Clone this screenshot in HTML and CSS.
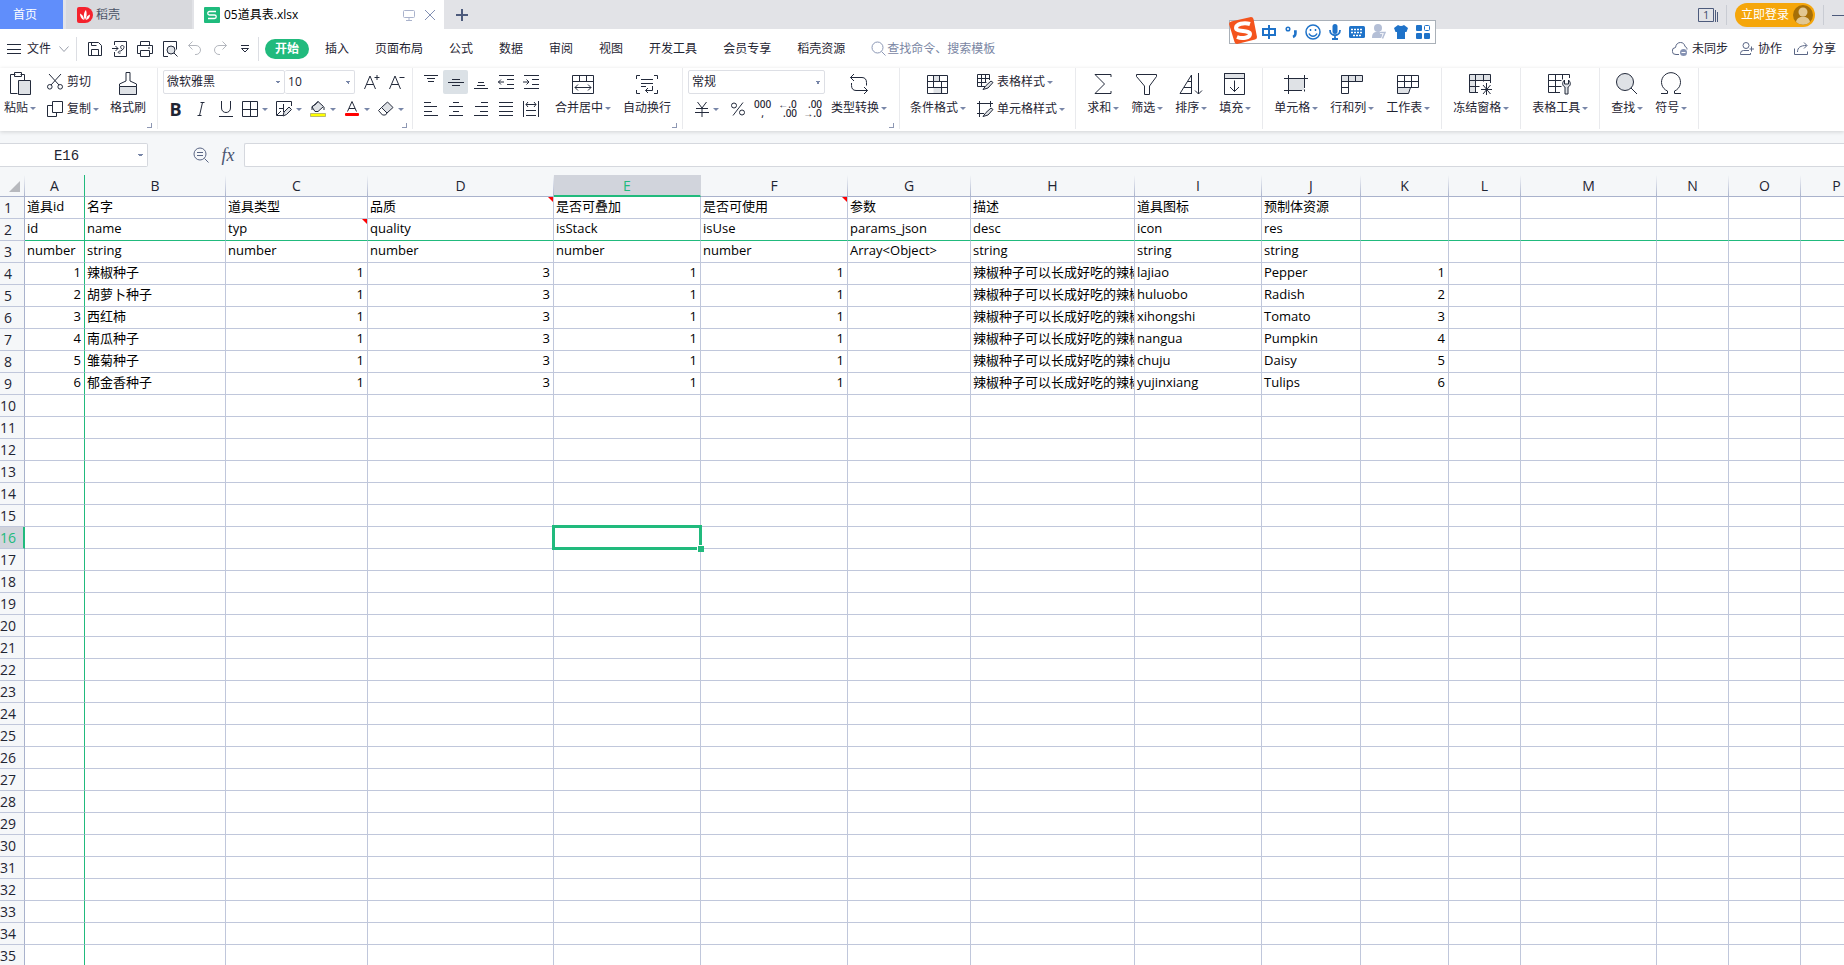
FILE: index.html
```html
<!DOCTYPE html>
<html lang="zh-CN">
<head>
<meta charset="utf-8">
<title>05道具表.xlsx</title>
<link rel="stylesheet" href="styles.css">
</head>
<body>
<header class="tabs">
  <button class="tab tab-home">首页</button>
  <button class="tab tab-docer">
    <svg width="16" height="16" viewBox="0 0 16 16"><path d="M2 0h6a8 8 0 0 1 0 16H2a2 2 0 0 1-2-2V2a2 2 0 0 1 2-2z" fill="#f5222d"/><path d="M8 13C6 9 7 5 9 3c1 3 1 7-1 10zM7 13C4 12 3 9 3 6.500c2 1 4 3 4 6.500zM9 13c0-3 2-5 4-5.500 0 3-1.500 5-4 5.500z" fill="#fff"/></svg>稻壳</button>
  <div class="tab tab-active">
    <svg width="16" height="16" viewBox="0 0 16 16"><rect width="16" height="16" rx="1" fill="#1fbb7d"/><path d="M12 4.500H5.500a1.500 1.500 0 0 0 0 3.500h5a1.500 1.500 0 0 1 0 3.500H4" fill="none" stroke="#fff" stroke-width="1.300"/></svg>
    <span class="tab-name">05道具表.xlsx</span>
    <button class="icon-btn" aria-label="窗口"><svg width="12" height="12" fill="none" stroke="#aab3cc"><path d="M1.500 1.500h9a1 1 0 0 1 1 1v5a1 1 0 0 1-1 1h-9a1 1 0 0 1-1-1v-5a1 1 0 0 1 1-1zM6 8.500v3M3 11.500h6"/></svg></button>
    <button class="icon-btn" aria-label="关闭"><svg width="12" height="12" fill="none" stroke="#8290b3"><path d="M1 1l10 10M11 1L1 11"/></svg></button>
  </div>
  <button class="icon-btn tab-add" aria-label="新建"><svg width="12" height="12"><path d="M6 0v12M0 6h12" stroke="#4d5b7c" stroke-width="2"/></svg></button>
  <div class="win">
    <button class="icon-btn" aria-label="窗口数"><svg width="20" height="14" fill="none" stroke="#4d5b7c"><path d="M.5.5h15v13H.5zM17.500 2v12M19.500 4v10"/><text x="5" y="11" font-size="11" font-family="Open Sans" fill="#3d4b6c" stroke="none">1</text></svg></button>
    <span class="vline"></span>
    <button class="login">立即登录<svg width="20" height="20"><circle cx="10" cy="10" r="10" fill="#a66f08"/><circle cx="10" cy="7" r="4.500" fill="#e2c791"/><path d="M3 17c1-7 13-7 14 0a10 10 0 0 1-14 0z" fill="#e2c791"/></svg></button>
    <span class="vline"></span>
    <button class="icon-btn minimize" aria-label="最小化"><svg width="12" height="12"><path d="M0 6.500h12" stroke="#4d5b7c"/></svg></button>
  </div>
</header>

<nav class="menu">
  <button class="file"><svg width="14" height="10" stroke="#232a3b"><path d="M0 .5h14M0 5h14M0 9.500h14" shape-rendering="crispEdges"/></svg>文件<svg width="10" height="6" fill="none" stroke="#9a9fab"><path d="M.5.5L5 5.500 9.500.5"/></svg></button>
  <span class="vline menu-line"></span>
  <div class="quick">
    <button aria-label="保存"><svg class="ic" width="16" height="16"><path d="M1.500 1.500h10l3 3v10h-13zM4.500 14.500v-6h7v6M4.500 1.500v3h5"/></svg></button>
    <button aria-label="输出为PDF"><svg class="ic" width="16" height="16"><path d="M2.500 4V.5h12v15h-12V11M0 7.500h6M3.500 5L6 7.500 3.500 10M8.500 12c-3 1-3-2 0-2 3-1 5-5 2-5.500-3 0-2 3 0 4"/></svg></button>
    <button aria-label="打印"><svg class="ic" width="16" height="16"><path d="M3.500 4.500v-4h9v4M3.500 12.500h-3v-8h15v8h-3M3.500 9.500h9v6h-9zM11 7h2"/></svg></button>
    <button aria-label="打印预览"><svg class="ic" width="16" height="16"><path d="M6 15.500H1.500V.5h13v8"/><circle cx="9" cy="9" r="4" fill="#dfe2e6"/><path d="M12 12l3.500 3.500"/></svg></button>
    <button aria-label="撤销"><svg class="ic dim" width="16" height="16"><path d="M5.500.5l-4 4 4 4M1.500 4.500H9a4.500 4.500 0 0 1 0 9H8"/></svg></button>
    <button aria-label="恢复"><svg class="ic dim" width="16" height="16"><path d="M10.500.5l4 4-4 4M14.500 4.500H7a4.500 4.500 0 0 0 0 9h1"/></svg></button>
    <button aria-label="更多"><svg class="ic" width="8" height="8"><path d="M0 .5h8M.5 3.500L4 7l3.500-3.500z"/></svg></button>
  </div>
  <span class="vline menu-line"></span>
  <button class="pill">开始</button>
  <div class="menus"><button>插入</button><button>页面布局</button><button>公式</button><button>数据</button><button>审阅</button><button>视图</button><button>开发工具</button><button>会员专享</button><button>稻壳资源</button></div>
  <button class="search"><svg width="16" height="16" fill="none" stroke="#8c98b5"><circle cx="6.500" cy="6.500" r="5.500"/><path d="M10.500 10.500l4 4"/></svg>查找命令、搜索模板</button>
  <div class="share">
    <button><svg width="16" height="14" fill="none" stroke="#5a6685"><path d="M7 12.500H4a3.500 3.500 0 0 1-.5-7C4 2 6 .5 8.500.5s4 1.500 4.500 4c1.500.500 2 1.500 2 3"/><circle cx="11.500" cy="10.500" r="3.500" fill="#8592b3" stroke="none"/><path d="M9.500 10.500h4" stroke="#fff"/></svg>未同步</button>
    <button><svg width="14" height="14" fill="none" stroke="#5a6685"><circle cx="6" cy="3.500" r="3"/><path d="M9 8.500H3.500a3 3 0 0 0-3 3v1h10v-1.500M9.500 7h4.500M11.500 4.500v5"/></svg>协作</button>
    <button><svg width="14" height="14" fill="none" stroke="#5a6685"><path d="M.5 6.500v6h13v-3M3.500 10c0-4.500 3-6.500 9-6.500M10 .5l3 3-3 3"/></svg>分享</button>
  </div>
</nav>

<section class="ribbon">
  <div class="group g-clip">
    <button class="big"><svg class="ic" width="22" height="24"><path d="M6.500 2.500h-5v19h7M15.500 8V2.500h-4M5.500.5h7v4h-7z"/><path d="M9.500 8.500h12v14h-12z" fill="#dfe2e6"/></svg><span class="dd">粘贴</span></button>
    <div class="stack">
      <button class="row"><svg class="ic" width="16" height="16"><path d="M2 0l10 11M14 0L4 11"/><circle cx="2.800" cy="12.800" r="2.300"/><circle cx="13.200" cy="12.800" r="2.300"/></svg>剪切</button>
      <button class="row"><svg class="ic" width="16" height="16"><path d="M5.500.5h10v11h-10zM5.500 4.500h-5v11h9v-4"/></svg><span class="dd">复制</span></button>
    </div>
    <button class="big"><svg class="ic" width="18" height="24"><path d="M.5 14.500h17v8H.5z" fill="#dfe2e6"/><path d="M.5 14.500V12L7 9V.5h4V9l6.500 3v2.500"/></svg>格式刷</button>
    <i class="corner"></i>
  </div>

  <div class="group g-font">
    <div class="line">
      <select class="combo c-font" aria-label="字体"><option>微软雅黑</option></select><select class="combo c-size" aria-label="字号"><option>10</option></select>
      <button class="sq first" aria-label="增大字号"><svg class="ic" width="16" height="16"><path d="M.5 15L6 2l5.500 13M2.500 10.500h7M10.500 3.500h5M13 1v5"/></svg></button>
      <button class="sq" aria-label="减小字号"><svg class="ic" width="16" height="16"><path d="M.5 15L6 2l5.500 13M2.500 10.500h7M10.500 3.500h5"/></svg></button>
    </div>
    <div class="line">
      <button class="sq bold">B</button>
      <button class="sq" aria-label="倾斜"><svg class="ic" width="16" height="16"><path d="M9.500 1.500L6.500 14.500M7.500 1.500h4M4.500 14.500h4"/></svg></button>
      <button class="sq" aria-label="下划线"><svg class="ic" width="16" height="16"><path d="M3.500 0v7c0 6 9 6 9 0V0M1 15.500h14"/></svg></button>
      <button class="split" aria-label="边框"><svg class="ic" width="16" height="16"><path d="M.5.5h15v15H.5zM8.500.5v15M.5 8.500h15"/></svg></button>
      <button class="split" aria-label="单元格绘制"><svg class="ic" width="16" height="16"><path d="M7 14.500H.5V.5h15V5M3 7.500h4M7.500 3v8M1 14l4-4"/><path d="M13 6l2.500 2.500-5 5L7 15l1-4z" fill="#dfe2e6"/></svg></button>
      <button class="split" aria-label="填充颜色"><svg class="ic" width="16" height="16"><path d="M8 .5l5.500 5L8 10.500H5L2 6z" fill="#dfe2e6"/><path d="M2 9V5.500C4 4 6 4 8 .5M14 6v3"/><path d="M.5 12.500h15v3H.5z" fill="#ff0" stroke="#77765c" stroke-width=".5"/></svg></button>
      <button class="split" aria-label="字体颜色"><svg class="ic" width="16" height="16"><path d="M3.500 10.500L8 .5l4.500 10M5 7.500h6"/><rect x="1" y="12" width="14" height="3" rx="1" fill="#f00" stroke="none"/></svg></button>
      <button class="split" aria-label="清除"><svg class="ic" width="16" height="16"><path d="M9.500 1L15 6.500 9 12 3.500 6.500z" fill="#dfe2e6"/><path d="M3.500 6.500L.5 9.500l4 4.500h3L9 12"/></svg></button>
    </div>
    <i class="corner"></i>
  </div>

  <div class="group g-align">
    <div class="stack">
      <div class="line">
        <button class="al" aria-label="顶端对齐"><svg class="ic" width="16" height="16"><path d="M1 1.500h14M4 4.500h8M5 7.500h6"/></svg></button>
        <button class="al on" aria-label="垂直居中"><svg class="ic" width="16" height="16"><path d="M4 5.500h8M0 8.500h16M4 11.500h8"/></svg></button>
        <button class="al" aria-label="底端对齐"><svg class="ic" width="16" height="16"><path d="M5 8.500h6M4 11.500h8M1 14.500h14"/></svg></button>
        <button class="al" aria-label="减少缩进"><svg class="ic" width="16" height="16"><path d="M1 1.500h15M9 5.500h7M9 10.500h7M1 14.500h15M0 8h6M3 5.500L.5 8 3 10.500"/></svg></button>
        <button class="al" aria-label="增加缩进"><svg class="ic" width="16" height="16"><path d="M1 1.500h15M9 5.500h7M9 10.500h7M1 14.500h15M0 8h6M3.500 5.500L6 8l-2.500 2.500"/></svg></button>
      </div>
      <div class="line">
        <button class="al" aria-label="左对齐"><svg class="ic" width="16" height="16"><path d="M1 1.500h7M1 5.500h13M1 10.500h8M1 14.500h14"/></svg></button>
        <button class="al" aria-label="居中"><svg class="ic" width="16" height="16"><path d="M5 1.500h6M1 5.500h14M5 10.500h6M1 14.500h14"/></svg></button>
        <button class="al" aria-label="右对齐"><svg class="ic" width="16" height="16"><path d="M8 1.500h7M2 5.500h13M7 10.500h8M1 14.500h14"/></svg></button>
        <button class="al" aria-label="两端对齐"><svg class="ic" width="16" height="16"><path d="M1 1.500h14M1 5.500h14M1 10.500h14M1 14.500h14"/></svg></button>
        <button class="al" aria-label="分散对齐"><svg class="ic" width="16" height="16"><path d="M.5 0v16M15.500 0v16M3 3.500h10M5 1L3 3.500 5 6M11 1l2 2.500L11 6M3 9.500h10M3 14.500h10"/></svg></button>
      </div>
    </div>
    <button class="big"><svg class="ic" width="22" height="24"><path d="M.5 3.500h21v18H.5zM.5 9.500h21M7.500 3.500v6M14.500 3.500v6M3 15.500h16M6 12.500l-3 3 3 3M16 12.500l3 3-3 3"/></svg><span class="dd">合并居中</span></button>
    <button class="big"><svg class="ic" width="22" height="24"><path d="M4 3.500H.5V7M18 3.500h3.500V7M4 21.500H.5V18M18 21.500h3.500V18M5 7.500h12M5 11.500h12M5 14.500h5M16.500 14v4.500h-7M12 16l-2.500 2.500L12 21"/></svg>自动换行</button>
    <i class="corner"></i>
  </div>

  <div class="group g-num">
    <div class="stack">
      <select class="combo c-num" aria-label="数字格式"><option>常规</option></select>
      <div class="line">
        <button class="split yen" aria-label="货币"><svg class="ic" width="14" height="16"><path d="M2.500 1L7 7l4.500-6M7 7v9M1 7.500h12M0 11.500h14"/></svg></button>
        <button class="al" aria-label="百分比"><svg class="ic" width="16" height="16"><circle cx="4" cy="4.500" r="2.500"/><circle cx="12" cy="11.500" r="2.500"/><path d="M13 1.500L3 14.500"/></svg></button>
        <button class="al mono"><span>000</span><span>,</span></button>
        <button class="al mono"><span>←.0</span><span class="end">.00</span></button>
        <button class="al mono"><span class="end">.00</span><span>→.0</span></button>
      </div>
    </div>
    <button class="big"><svg class="ic" width="20" height="24"><path d="M5 2L1.500 5.500 5 9M1.500 5.500H13c3 0 4.500 2 4.500 5v3M15 15l3.500 3.500L15 22M18.500 18.500H7c-3 0-4.500-2-4.500-5V11"/></svg><span class="dd">类型转换</span></button>
    <i class="corner"></i>
  </div>

  <div class="group g-style">
    <button class="big"><svg class="ic" width="22" height="24"><path d="M6.500 3.500h6v6h-6zM6.500 15.500h9v6h-9z" fill="#dfe2e6" stroke="none"/><path d="M.5 3.500h20v18H.5zM.5 9.500h20M.5 15.500h20M6.500 3.500v12M12.500 3.500v6M14.500 9.500v12"/></svg><span class="dd">条件格式</span></button>
    <div class="stack">
      <button class="row"><svg class="ic" width="16" height="16"><path d="M8 12.500H.5V.5h12V6M.5 4.500h12M.5 8.500h9M4.500.5v12M8.500.5v8"/><path d="M14 7l2 1.500-5 5.500-5 1.500 3-4z" fill="#dfe2e6"/></svg><span class="dd">表格样式</span></button>
      <button class="row"><svg class="ic" width="16" height="16"><path d="M0 2.500h16M2.500 0v16M0 12.500h7M13.500 0v6"/><path d="M14 7l2 1.500-5 5.500-5 1.500 3-4z" fill="#dfe2e6"/></svg><span class="dd">单元格样式</span></button>
    </div>
  </div>

  <div class="group">
    <button class="big"><svg class="ic" width="18" height="24"><path d="M17 5V2.500H1L10.500 12 1 21.500h16V19"/></svg><span class="dd">求和</span></button>
    <button class="big"><svg class="ic" width="22" height="24"><path d="M.5 2.500h20v2L13.500 14v8.500h-5V14L.5 4.500z"/></svg><span class="dd">筛选</span></button>
    <button class="big"><svg class="ic" width="24" height="24"><path d="M1 21.500L12.500 3v19M9 9.500h3.500M5 15.500h7.500M1 21.500h11.500M19.500 1v21M16 18.500l3.500 3.500 3.500-3.500"/></svg><span class="dd">排序</span></button>
    <button class="big"><svg class="ic" width="22" height="24"><path d="M.5 1.500h20v5H.5z" fill="#dfe2e6"/><path d="M.5 1.500h20v21H.5zM10.500 8.500v11M6 15l4.500 4.500L15 15"/></svg><span class="dd">填充</span></button>
  </div>

  <div class="group">
    <button class="big"><svg class="ic" width="24" height="24"><path d="M4 6h16v12H4z" fill="#dfe2e6" stroke="none"/><path d="M0 6.500h24M0 18.500h18M4.500 3v19M20.500 3v13M20.500 17.500v2"/></svg><span class="dd">单元格</span></button>
    <button class="big"><svg class="ic" width="22" height="24"><path d="M.5 3.500h21v6H.5z" fill="#dfe2e6"/><path d="M7.500 3.500v18h-7v-18M14.500 3.500v6M.5 15.500h7"/></svg><span class="dd">行和列</span></button>
    <button class="big"><svg class="ic" width="22" height="24"><path d="M.5 15.500h13l-2 6H.5z" fill="#dfe2e6"/><path d="M.5 3.500h21v12H.5zM.5 9.500h21M7.500 3.500v12M14.500 3.500v12"/></svg><span class="dd">工作表</span></button>
  </div>

  <div class="group">
    <button class="big"><svg class="ic" width="24" height="24"><path d="M.5 2.500h6v18h-6zM6.500 2.500h15v6h-15z" fill="#dfe2e6" stroke="none"/><path d="M9 20.500H.5v-18h21V11M.5 8.500h21M.5 14.500h10M6.500 2.500v18M14.500 2.500v7M17.500 11v12M12 17.500h11M14 13l7.500 9M21.500 13L14 22"/></svg><span class="dd">冻结窗格</span></button>
  </div>
  <div class="group">
    <button class="big"><svg class="ic" width="24" height="24"><path d="M12 20.500H.5v-18h21V6M.5 8.500h13M.5 14.500h13M7.500 2.500v18M14.500 2.500v5"/><path d="M16.500 8c-3 3-2 6 .5 7v7h3v-7c2.500-1 3.500-4 .5-7v4h-4z" fill="#dfe2e6"/></svg><span class="dd">表格工具</span></button>
  </div>
  <div class="group">
    <button class="big"><svg class="ic" width="24" height="24"><circle cx="10" cy="10" r="8.500" fill="#dfe2e6"/><path d="M16 16l6 6"/></svg><span class="dd">查找</span></button>
    <button class="big"><svg class="ic" width="20" height="24"><path d="M0 21.500h6.500V19a9.500 9.500 0 1 1 7 0v2.500H20"/></svg><span class="dd">符号</span></button>
  </div>
</section>

<div class="formula">
  <input class="name-box" aria-label="名称框" value="E16">
  <button class="icon-btn zoomout" aria-label="缩小"><svg width="16" height="16" fill="none" stroke="#5a6685"><circle cx="7" cy="7" r="6"/><path d="M4 5.500h6M4 8.500h6M11.500 11.500l4 4"/></svg></button>
  <button class="fx">fx</button>
  <input class="fx-input" aria-label="编辑栏">
</div>

<main class="sheet"><table id="grid"></table></main>

<aside class="ime">
  <svg class="ime-logo" width="28" height="28" viewBox="0 0 28 28"><path d="M0 7q0-2 2-2.500L22 0q2 0 2.500 2L28 20q0 2-2 2.500L8 27q-2 0-2.500-2z" fill="#f4541d"/><path d="M21 7C15 5 7 7 7 11s14 2 14 6-8 5-13 3" fill="none" stroke="#fff" stroke-width="4"/></svg>
  <svg width="16" height="16" fill="none" stroke="#1f73c9" stroke-width="2"><path d="M2 5h12v6H2zM8 1v14"/></svg>
  <svg width="12" height="16" fill="none" stroke="#1f73c9" stroke-width="1.500"><circle cx="3" cy="5" r="1.800"/><path d="M9 7.500h1.500v1.500q0 3-2.500 4" stroke-width="2.500"/></svg>
  <svg width="16" height="16" fill="none" stroke="#1f73c9" stroke-width="1.500"><circle cx="8" cy="8" r="7"/><path d="M5.500 5v2M10.500 5v2M4 9.500c1.500 3.500 6.500 3.500 8 0"/></svg>
  <svg width="12" height="16" fill="none" stroke="#1f73c9" stroke-width="1.800"><rect x="3.500" y="0" width="5" height="10" rx="2.500" fill="#1f73c9" stroke="none"/><path d="M1 6c0 7 10 7 10 0M6 11v4M3 15h6"/></svg>
  <svg width="16" height="12"><rect width="16" height="12" rx="1.500" fill="#1f73c9"/><path d="M2 3.500h12M2 6.500h12M4 9.500h8" stroke="#fff" stroke-width="1.500" stroke-dasharray="2 1"/></svg>
  <svg width="14" height="16"><circle cx="6" cy="4" r="4" fill="#b4bfd6"/><path d="M0 14c0-6 3-6 6-6s5 1 5 6z" fill="#b4bfd6"/><path d="M8 8.500h5l-2.500 6" fill="none" stroke="#fff" stroke-width="3"/><path d="M8 8.500h5l-2.500 6" fill="none" stroke="#b4bfd6" stroke-width="1.500"/></svg>
  <svg width="14" height="14"><path d="M4 0q3 2 6 0l4 3-1.500 4H11v7H3V7H1.500L0 3z" fill="#1f73c9"/></svg>
  <svg width="14" height="14" fill="#1f73c9"><rect width="6" height="6" rx="1"/><rect y="8" width="6" height="6" rx="1"/><rect x="8" y="8" width="6" height="6" rx="1"/><rect x="8.500" y=".5" width="5" height="5" rx="1" fill="none" stroke="#1f73c9"/></svg>
</aside>
<script src="script.js"></script>
</body>
</html>
```
FILE: styles.css
```css
* { box-sizing: border-box; }
body {
  margin: 0;
  height: 100vh;
  overflow: hidden;
  display: flex;
  flex-direction: column;
  font: 12px/18px "Open Sans", "Noto Sans CJK SC", sans-serif;
  color: #1f2533;
  background: #fff;
}
button {
  font: inherit;
  color: inherit;
  background: none;
  border: 0;
  padding: 0;
  white-space: nowrap;
}
svg { display: block; flex: none; }
.ic { fill: none; stroke: #232a3b; overflow: visible; }
.dim { stroke: #b4b7be; }
.icon-btn { display: flex; align-items: center; justify-content: center; }
.vline { width: 1px; background: #c9ccd3; }

.tabs { display: flex; height: 29px; flex: none; background: #e2e3e7; }
.tab { display: flex; align-items: center; }
.tab-home { width: 63px; padding-left: 13px; background: #608efb; color: #fff; margin-right: 3px; }
.tab-docer { width: 126px; padding-left: 11px; gap: 3px; background: #d8d9dd; color: #4b5467; margin-right: 2px; }
.tab-active { width: 250px; padding: 0 6px 0 10px; gap: 4px; background: #fff; color: #000; }
.tab-name { flex: 1; }
.tab-active .icon-btn { width: 17px; }
.tab-add { width: 36px; }
.win { margin-left: auto; display: flex; align-items: center; gap: 8px; }
.win .vline { height: 20px; }
.login {
  display: flex;
  align-items: center;
  gap: 4px;
  height: 24px;
  padding: 0 2px 0 6px;
  border-radius: 12px;
  background: #f5a60a;
  color: #fff;
}
.minimize { width: 12px; overflow: hidden; }

.menu { display: flex; height: 39px; flex: none; align-items: center; }
.file { display: flex; align-items: center; gap: 6px; padding: 0 7px; }
.file svg:last-child { margin-left: 2px; }
.menu-line { height: 24px; background: #dcdee3; }
.quick { display: flex; padding: 0 1px 0 5px; }
.quick button { width: 25px; height: 24px; display: flex; align-items: center; justify-content: center; }
.pill { height: 20px; width: 44px; margin-left: 6px; border-radius: 10px; background: #21ba7d; color: #fff; font-weight: 700; }
.menus { display: flex; gap: 26px; padding: 0 26px 0 16px; }
.search { display: flex; align-items: center; color: #7a86a3; }
.share { margin-left: auto; display: flex; gap: 12px; padding-right: 8px; }
.share button { display: flex; align-items: center; gap: 4px; }

.ribbon {
  display: flex;
  flex: none;
  height: 63px;
  position: relative;
  box-shadow: 0 1px 4px rgba(0, 0, 0, 0.15);
}
.group {
  position: relative;
  display: flex;
  flex: none;
  gap: 12px;
  height: 61px;
  padding: 0 11px;
  border-right: 1px solid #e9eaed;
}
.big { display: flex; flex-direction: column; align-items: center; gap: 3px; padding-top: 4px; height: 54px; }
.dd { display: inline-flex; align-items: center; gap: 2px; }
.dd::after, .split::after {
  content: "";
  border: 3px solid transparent;
  border-top-color: #7886a8;
  border-bottom: 0;
}
.stack { display: flex; flex-direction: column; gap: 3px; padding-top: 2px; }
.line { display: flex; height: 24px; align-items: center; }
.row { display: flex; align-items: center; gap: 4px; height: 24px; }
.sq { width: 25px; height: 24px; display: flex; align-items: center; justify-content: center; }
.first { margin-left: 4px; }
.bold { font-weight: 700; font-size: 18px; }
.split { display: flex; align-items: center; gap: 4px; width: 34px; height: 24px; padding-left: 4px; }
.al { width: 25px; height: 24px; display: flex; align-items: center; justify-content: center; border-radius: 2px; }
.on { background: #dbe1e6; }
.mono { flex-direction: column; align-items: center; font: 500 10px/9px "Noto Sans", sans-serif; }
.mono .end { align-self: flex-end; padding-right: 3px; }
.yen { width: 37px; padding-left: 7px; }
.corner { position: absolute; right: 5px; bottom: 1px; width: 5px; height: 5px; border: solid #8d97b3; border-width: 0 1px 1px 0; }
.combo, .name-box {
  background: #fff linear-gradient(to bottom left, #7886a8 50%, transparent 50%) no-repeat right 6px center / 3px 3px;
  background-image: linear-gradient(to bottom left, #7886a8 50%, transparent 50%), linear-gradient(to bottom right, #7886a8 50%, transparent 50%);
  background-position: right 6px center, right 3px center;
}
.combo {
  appearance: none;
  height: 24px;
  margin: 0;
  border: 1px solid #dddfe5;
  border-radius: 2px;
  padding: 0 3px;
  font: inherit;
  color: inherit;
}
.c-font { width: 122px; }
.c-size { width: 70px; border-left: 0; }
.c-num { width: 137px; }
.g-clip { padding-left: 4px; gap: 11px; }
.g-font { flex-direction: column; gap: 3px; padding: 2px 3px 0 5px; }
.g-align { padding-left: 5px; }
.g-num { padding: 0 12px 0 5px; gap: 6px; }
.g-style { padding: 0 10px; gap: 11px; }

.formula { display: flex; flex: none; height: 44px; padding: 12px 0 8px; background: #f5f7f9; }
.name-box, .fx-input { border: 1px solid #d5d8de; background-color: #fff; height: 24px; outline: 0; }
.name-box {
  width: 148px;
  border-left: 0;
  border-radius: 0 2px 2px 0;
  padding: 2px 14px 0 0;
  text-align: center;
  font: 14px/20px "Liberation Mono", monospace;
  color: #1f2533;
}
.zoomout { width: 22px; margin-left: 42px; }
.fx { width: 32px; font: italic 18px/22px "Liberation Serif", serif; color: #4a5471; }
.fx-input { flex: 1; border-right: 0; padding: 0 6px; border-radius: 2px 0 0 2px; font: inherit; }

.sheet { flex: 1; overflow: hidden; background: #fff; }
table { table-layout: fixed; border-collapse: separate; border-spacing: 0; font-size: 13px; color: #000; }
th, td { height: 22px; padding: 0; border: solid #c0c7db; border-width: 0 1px 1px 0; white-space: nowrap; line-height: 20px; }
td { overflow: hidden; text-align: left; padding: 0 2px 2px; line-height: 19px; position: relative; }
.num { text-align: right; padding-right: 3px; }
th { background: #f5f7f9; font-weight: 400; font-size: 14px; color: #1f2533; }
thead th {
  border-bottom-color: #a9b2cc;
  border-right-color: transparent;
  background: linear-gradient(#f5f7f9, #a9b2cc) no-repeat right / 1px 100% border-box, #f5f7f9;
}
tbody th { border-right-color: #a9b2cc; padding-right: 8px; }
thead .hot { background: #d1d4dc; color: #21ba7d; border-bottom: 2px solid #21ba7d; line-height: 19px; }
tbody .hot { background: #d1d4dc; color: #21ba7d; border-right: 2px solid #21ba7d; padding-right: 7px; }
.pick-all { position: relative; }
.pick-all::after { content: ""; position: absolute; right: 4px; bottom: 4px; border-left: 11px solid transparent; border-bottom: 11px solid #b7b9be; }
.freeze-x { border-right-color: #21ba7d; }
thead .freeze-x { background: #f5f7f9; border-right-color: #21ba7d; }
.freeze-y td { border-bottom-color: #21ba7d; }
.note::after { content: ""; position: absolute; right: 0; top: 0; border-left: 5px solid transparent; border-top: 5px solid #f00; }
.cur { overflow: visible; z-index: 1; }
.cur::before { content: ""; position: absolute; inset: -2px; border: 3px solid #21ba7d; }
.cur::after { content: ""; position: absolute; right: -4px; bottom: -4px; width: 6px; height: 6px; background: #21ba7d; border: solid #fff; border-width: 1px 0 0 1px; }

.ime {
  position: absolute;
  top: 20px;
  right: 408px;
  height: 24px;
  display: grid;
  grid-auto-flow: column;
  grid-auto-columns: 22px;
  align-items: center;
  justify-items: center;
  padding: 0 1px 0 28px;
  background: #fff;
  border: 1px solid #a9b0b8;
}
.ime-logo { position: absolute; left: -1px; top: -4px; }
```
FILE: script.js
```js
const widths = [60, 141, 142, 186, 147, 147, 123, 164, 127, 99, 88, 72, 136, 72, 72, 72];
const desc = '辣椒种子可以长成好吃的辣椒';
const item = (n, name, icon, res) => [n, name, 1, 3, 1, 1, '', desc, icon, res, n];
const rows = [
  ['道具id', '名字', '道具类型', '品质', '是否可叠加', '是否可使用', '参数', '描述', '道具图标', '预制体资源'],
  ['id', 'name', 'typ', 'quality', 'isStack', 'isUse', 'params_json', 'desc', 'icon', 'res'],
  ['number', 'string', 'number', 'number', 'number', 'number', 'Array<Object>', 'string', 'string', 'string'],
  item(1, '辣椒种子', 'lajiao', 'Pepper'),
  item(2, '胡萝卜种子', 'huluobo', 'Radish'),
  item(3, '西红柿', 'xihongshi', 'Tomato'),
  item(4, '南瓜种子', 'nangua', 'Pumpkin'),
  item(5, '雏菊种子', 'chuju', 'Daisy'),
  item(6, '郁金香种子', 'yujinxiang', 'Tulips')
];
const notes = ['D1', 'F1', 'C2'];
const selected = { col: 4, row: 16 };

const table = document.getElementById('grid');
table.style.width = widths.reduce((a, b) => a + b, 25) + 'px';

function add(parent, tag, text, classes) {
  const el = document.createElement(tag);
  if (text !== undefined) el.textContent = text;
  if (classes) el.className = classes.filter(Boolean).join(' ');
  parent.appendChild(el);
  return el;
}

const cols = add(table, 'colgroup');
[25, ...widths].forEach(w => { add(cols, 'col').style.width = w + 'px'; });

const head = add(add(table, 'thead'), 'tr');
add(head, 'th', '', ['pick-all']);
widths.forEach((w, c) => add(head, 'th', String.fromCharCode(65 + c),
  [c === selected.col && 'hot', c === 0 && 'freeze-x']));

const body = add(table, 'tbody');
for (let r = 1; r <= 35; r++) {
  const tr = add(body, 'tr', undefined, [r === 2 && 'freeze-y']);
  add(tr, 'th', r, [r === selected.row && 'hot']);
  widths.forEach((w, c) => {
    const value = (rows[r - 1] || [])[c] ?? '';
    add(tr, 'td', value, [
      typeof value === 'number' && 'num',
      c === 0 && 'freeze-x',
      notes.includes(String.fromCharCode(65 + c) + r) && 'note',
      r === selected.row && c === selected.col && 'cur'
    ]);
  });
}
```
